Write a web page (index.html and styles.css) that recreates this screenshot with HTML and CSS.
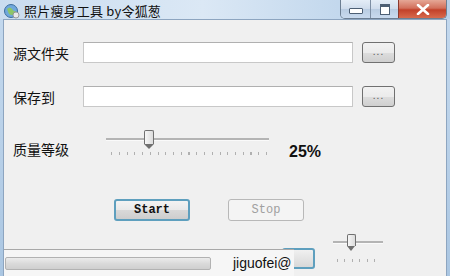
FILE: index.html
```html
<!DOCTYPE html>
<html lang="zh-CN">
<head>
  <meta charset="UTF-8" />
  <title>照片瘦身工具 by令狐葱</title>
  <link rel="stylesheet" href="styles.css">
</head>
<body>
  <div class="window">
    <div class="titlebar">
      <svg class="app-icon" width="17" height="16" viewBox="0 0 17 16">
        <circle cx="8" cy="8" r="6.5" fill="#6fa8dc" stroke="#3d6f9e" stroke-width="1"/>
        <path d="M4 6 Q7 3 9 6 T13 8 L12 11 Q9 13 6 11 Z" fill="#8cc56a"/>
        <circle cx="13" cy="12" r="3" fill="#e8e8e8" stroke="#888" stroke-width="0.8"/>
      </svg>
      <span class="title">照片瘦身工具 by令狐葱</span>
      <div class="controls">
        <div class="ctl ctl-min"><span></span></div>
        <div class="ctl ctl-max"><span></span></div>
        <div class="ctl ctl-close">
          <svg width="14" height="11" viewBox="0 0 14 11"><path d="M2 1 L12 10 M12 1 L2 10" stroke="#fff" stroke-width="2.6" stroke-linecap="round"/></svg>
        </div>
      </div>
    </div>

    <div class="client">
      <div class="row row-src">
        <label class="lbl">源文件夹</label>
        <input class="path" type="text" />
        <button class="browse">...</button>
      </div>
      <div class="row row-dst">
        <label class="lbl">保存到</label>
        <input class="path" type="text" />
        <button class="browse">...</button>
      </div>

      <div class="row row-quality">
        <label class="lbl lbl-q">质量等级</label>
        <div class="slider slider-big">
          <div class="track"></div>
          <div class="thumb" style="left: 38px"></div>
          <div class="ticks"></div>
        </div>
        <span class="percent">25%</span>
      </div>

      <div class="actions">
        <button class="btn btn-start">Start</button>
        <button class="btn btn-stop" disabled>Stop</button>
      </div>

      <div class="footer">
        <div class="status">
          <div class="progress"></div>
          <span class="credit">jiguofei@</span>
        </div>
        <div class="hidden-btn"></div>
        <div class="slider slider-small">
          <div class="track"></div>
          <div class="thumb" style="left: 14px"></div>
          <div class="ticks"></div>
        </div>
      </div>
    </div>
  </div>
</body>
</html>
```

FILE: styles.css
```css
body {
  margin: 0;
  padding: 0;
  background: #fff;
  font-family: "Noto Sans CJK SC", "Liberation Sans", sans-serif;
}
.window {
  width: 450px;
  height: 276px;
  overflow: hidden;
  background: linear-gradient(180deg, #c4d9ee 0%, #bcd3ea 40%, #aac6e2 100%);
  display: flex;
  flex-direction: column;
}
.titlebar {
  height: 23px;
  display: flex;
  align-items: flex-start;
  position: relative;
  background: linear-gradient(90deg, #c9dcef 0%, #dbe8f5 45%, #c3d8ed 75%, #b9d1e9 100%);
}
.app-icon {
  margin: 3px 0 0 3px;
}
.title {
  font-size: 13px;
  line-height: 14px;
  margin: 4px 0 0 4px;
  color: #111;
  letter-spacing: 0.2px;
}
.controls {
  position: absolute;
  top: 0;
  right: 3px;
  height: 18px;
  display: flex;
  border: 1px solid #6c7e92;
  border-top: none;
  border-radius: 0 0 5px 5px;
  overflow: hidden;
}
.ctl {
  height: 18px;
  display: flex;
  align-items: center;
  justify-content: center;
  background: linear-gradient(180deg, #e4edf7 0%, #cfdcec 50%, #b9cce2 51%, #c9daee 100%);
}
.ctl-min {
  width: 29px;
  border-right: 1px solid #7d8ea3;
}
.ctl-min span {
  width: 12px;
  height: 4px;
  border: 1px solid #4d5f74;
  border-radius: 1px;
  background: #fff;
  margin-top: 4px;
}
.ctl-max {
  width: 27px;
  border-right: 1px solid #8a3a30;
}
.ctl-max span {
  width: 8px;
  height: 7px;
  border: 1px solid #4d5f74;
  border-top-width: 3px;
  background: #fff;
}
.ctl-close {
  width: 47px;
  background: linear-gradient(180deg, #e5a796 0%, #d2705c 45%, #c2412a 55%, #d86a4d 100%);
}
.client {
  flex: 1;
  margin: 0 3px;
  background: #f0f0f0;
  border-top: 1px solid #8da5c0;
  border-left: 1px solid #8da5c0;
  border-right: 1px solid #8da5c0;
  display: flex;
  flex-direction: column;
}
.row {
  display: flex;
  align-items: center;
  padding-left: 9px;
}
.row-src {
  margin-top: 22px;
  height: 21px;
}
.row-dst {
  margin-top: 23px;
  height: 21px;
}
.lbl {
  width: 70px;
  font-size: 14px;
  color: #111;
}
.path {
  width: 270px;
  height: 21px;
  box-sizing: border-box;
  border: 1px solid #c8c8c8;
  border-top-color: #b0b0b0;
  background: #fff;
  padding: 0;
  margin: 0;
}
.browse {
  width: 33px;
  height: 21px;
  margin-left: 9px;
  box-sizing: border-box;
  border: 1px solid #707070;
  border-radius: 3px;
  background: linear-gradient(180deg, #f2f2f2 0%, #ebebeb 50%, #dddddd 51%, #cfcfcf 100%);
  font-family: "Liberation Sans", sans-serif;
  font-size: 10px;
  letter-spacing: 1px;
  color: #555;
  padding: 0 0 2px;
}
.row-quality {
  margin-top: 24px;
  height: 28px;
  align-items: flex-start;
}
.lbl-q {
  width: 93px;
  margin-top: 8px;
}
.slider {
  position: relative;
}
.slider-big {
  width: 163px;
  height: 28px;
}
.track {
  position: absolute;
  left: 0;
  right: 0;
  height: 2px;
  background: #b4b4b4;
  border-bottom: 1px solid #fafafa;
}
.slider-big .track {
  top: 7px;
}
.thumb {
  position: absolute;
  width: 10px;
  height: 18px;
  box-sizing: border-box;
  border: 1px solid #707070;
  border-bottom: none;
  border-radius: 2px 2px 0 0;
  background: linear-gradient(90deg, #f6f6f6, #dcdcdc);
}
.thumb::after {
  content: "";
  position: absolute;
  left: -1px;
  bottom: -5px;
  width: 0;
  height: 0;
  border-left: 5px solid transparent;
  border-right: 5px solid transparent;
  border-top: 5px solid #707070;
}
.slider-big .thumb {
  top: -1px;
  height: 14px;
}
.ticks {
  position: absolute;
  height: 3px;
  background: repeating-linear-gradient(90deg, #b0b0b0 0 1px, transparent 1px 7.75px);
}
.slider-big .ticks {
  left: 5px;
  width: 157px;
  top: 21px;
}
.percent {
  margin: 12px 0 0 20px;
  font-family: "Liberation Sans", sans-serif;
  font-weight: bold;
  font-size: 16px;
  color: #111;
}
.actions {
  display: flex;
  margin: 40px 0 0 110px;
  gap: 38px;
}
.btn {
  width: 76px;
  height: 22px;
  box-sizing: border-box;
  font-family: "Liberation Mono", monospace;
  font-size: 12px;
  font-weight: bold;
  padding: 0;
  border-radius: 3px;
}
.btn-start {
  border: 2px solid #5e9fbe;
  background: linear-gradient(180deg, #f3f3f3 0%, #e9e9e9 50%, #d9d9d9 51%, #cdcdcd 100%);
  color: #111;
}
.btn-stop {
  border: 1px solid #b8b8b8;
  background: #f4f4f4;
  color: #a0a0a0;
  font-weight: normal;
}
.footer {
  margin-top: 28px;
  display: flex;
  align-items: flex-start;
}
.status {
  width: 290px;
  height: 26px;
  border-top: 1px solid #a8a8a8;
  background: #f6f6f6;
  display: flex;
  align-items: center;
  position: relative;
  z-index: 1;
}
.progress {
  width: 206px;
  height: 13px;
  margin-left: 1px;
  box-sizing: border-box;
  border: 1px solid #b2b2b2;
  border-radius: 2px;
  background: linear-gradient(180deg, #ececec 0%, #dadada 50%, #cfcfcf 100%);
}
.credit {
  margin-left: 22px;
  font-family: "Liberation Sans", sans-serif;
  font-size: 14px;
  color: #111;
}
.hidden-btn {
  width: 33px;
  height: 21px;
  margin: -1px 0 0 -12px;
  box-sizing: border-box;
  border: 2px solid #5e9fbe;
  border-radius: 3px;
  background: linear-gradient(180deg, #f0f0f0, #d8d8d8);
}
.slider-small {
  width: 50px;
  height: 28px;
  margin: -14px 0 0 18px;
}
.slider-small .track {
  top: 6px;
}
.slider-small .thumb {
  top: -1px;
  height: 12px;
  width: 9px;
}
.slider-small .thumb::after {
  border-left-width: 4.5px;
  border-right-width: 4.5px;
}
.slider-small .ticks {
  left: 4px;
  width: 42px;
  top: 24px;
  background: repeating-linear-gradient(90deg, #b0b0b0 0 1px, transparent 1px 7.5px);
}
```
